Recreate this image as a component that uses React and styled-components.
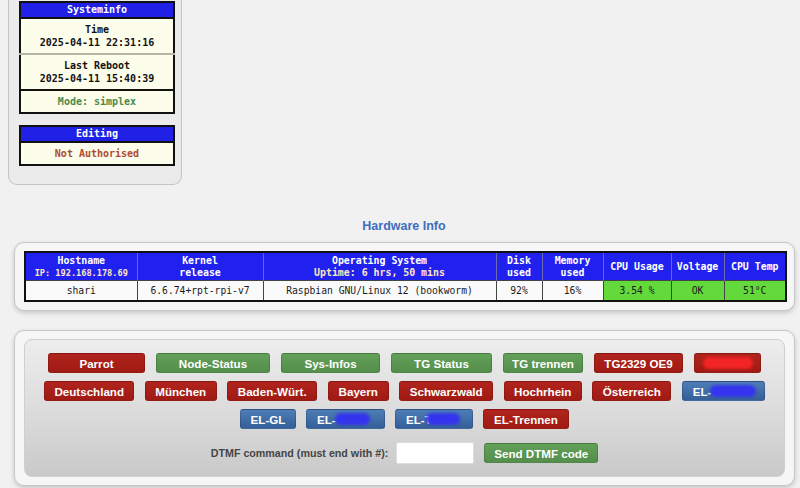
import styled, { createGlobalStyle } from 'styled-components';

const GlobalStyle = createGlobalStyle`
  html, body {
    margin: 0;
    padding: 0;
    background: #f1f1f1;
    overflow: hidden;
  }
  body {
    font-family: "Liberation Sans", Arial, sans-serif;
  }
`;

const Page = styled.div`
  width: 800px;
  height: 488px;
  overflow: hidden;
  display: flex;
  flex-direction: column;
`;

const SidePanel = styled.div`
  width: 174px;
  margin: -12px 0 0 8px;
  padding: 13px 8px 18px 10px;
  box-sizing: border-box;
  background: #ebebeb;
  border: 1px solid #c4c4c4;
  border-top: none;
  border-radius: 0 0 9px 9px;
  display: flex;
  flex-direction: column;
  gap: 11px;
`;

const InfoTable = styled.table`
  width: 156px;
  border-collapse: collapse;
  border: 2px solid #111;
  background: #fdfdeb;
  font-family: "DejaVu Sans Mono", monospace;
  font-size: 10px;
  font-weight: bold;
  text-align: center;
`;

const InfoHead = styled.th`
  background: #2020e6;
  color: #fff;
  height: 14px;
  padding: 0;
  line-height: 14px;
  font-size: 10px;
`;

const InfoCell = styled.td`
  padding: 4px 0;
  line-height: 13px;
  color: ${({ $color }) => $color || '#111'};
  border-top: 2px solid ${({ $line }) => $line || '#111'};
`;

const Heading = styled.h3`
  margin: 34px 0 9px;
  line-height: 14px;
  text-align: center;
  font-size: 12.5px;
  font-weight: bold;
  color: #3f6dbf;
  padding-left: 8px;
`;

const Frame = styled.div`
  width: 781px;
  box-sizing: border-box;
  margin: ${({ $mt }) => $mt || 0}px 0 0 14px;
  padding: 8px 9px;
  background: #f6f6f6;
  border: 1px solid #c6c6c6;
  border-radius: 10px;
  box-shadow: 0 2px 5px rgba(0, 0, 0, 0.18);
`;

const HwTable = styled.table`
  width: 761px;
  table-layout: fixed;
  border-collapse: collapse;
  border: 2px solid #111;
  font-family: "DejaVu Sans Mono", monospace;
  font-size: 9.7px;
  text-align: center;
`;

const HwHead = styled.th`
  background: #2121ef;
  color: #fff;
  font-weight: bold;
  padding: 1px 0;
  height: 25px;
  line-height: 12px;
  border-left: 1px solid #6a6ab0;
  font-size: 9.9px;
`;

const SubLine = styled.span`
  display: block;
  color: ${({ $tint }) => ($tint ? '#ffe6c0' : '#fff')};
  font-size: ${({ $small }) => ($small ? '8.6px' : '9.9px')};
`;

const HwCell = styled.td`
  background: ${({ $ok }) => ($ok ? '#63d93c' : '#fafafa')};
  color: #1a1a1a;
  height: 19px;
  padding: 0;
  border-left: 1px solid #444;
  border-top: 1px solid #444;
`;

const ControlBox = styled.div`
  background: linear-gradient(#ededed, #d9d9d9 60%, #c9c9c9);
  border: 1px solid #cfcfcf;
  border-radius: 8px;
  padding: 13px 0 12px;
  display: flex;
  flex-direction: column;
  align-items: center;
  gap: 8px;
`;

const Row = styled.div`
  display: flex;
  justify-content: center;
  align-items: center;
  gap: ${({ $gap }) => $gap || 10}px;
  margin-top: ${({ $mt }) => $mt || 0}px;
`;

const palette = {
  red: 'linear-gradient(#b0241d, #a01a14)',
  green: 'linear-gradient(#62a058, #558e4c)',
  blue: 'linear-gradient(#4e7db6, #345f98)',
};

const Btn = styled.button`
  position: relative;
  width: ${({ $w }) => $w}px;
  height: 20px;
  padding: 0;
  border: 1px solid rgba(0, 0, 0, 0.15);
  border-radius: 3px;
  background: ${({ $c }) => palette[$c]};
  color: #fff;
  font-family: "Liberation Sans", Arial, sans-serif;
  font-weight: bold;
  font-size: 11.6px;
  display: flex;
  align-items: center;
  justify-content: ${({ $left }) => ($left ? 'flex-start' : 'center')};
  padding-left: ${({ $left }) => ($left ? '10px' : '0')};
  overflow: hidden;
`;

const Smudge = styled.span`
  position: absolute;
  top: 3px;
  bottom: 3px;
  left: ${({ $l }) => $l}px;
  right: ${({ $r }) => $r}px;
  border-radius: 8px;
  background: ${({ $c }) => $c};
  filter: blur(1.5px);
`;

const Label = styled.span`
  font-size: 10.7px;
  font-weight: bold;
  color: #454545;
  margin-right: -2px;
`;

const Input = styled.input`
  width: 78px;
  height: 22px;
  box-sizing: border-box;
  border: 1px solid #ddd;
  border-radius: 2px;
  background: #fff;
`;

const columns = [112, 126, 233, 46, 61, 68, 53, 62];

const rowOne = [
  ['Parrot', 'red', 97],
  ['Node-Status', 'green', 114],
  ['Sys-Infos', 'green', 99],
  ['TG Status', 'green', 101],
  ['TG trennen', 'green', 80],
  ['TG2329 OE9', 'red', 89],
];

const rowTwo = [
  ['Deutschland', 90],
  ['München', 72],
  ['Baden-Würt.', 90],
  ['Bayern', 61],
  ['Schwarzwald', 94],
  ['Hochrhein', 78],
  ['Österreich', 79],
];

export default function App() {
  return (
    <Page>
      <GlobalStyle />
      <SidePanel>
        <InfoTable>
          <thead>
            <tr><InfoHead>Systeminfo</InfoHead></tr>
          </thead>
          <tbody>
            <tr><InfoCell $line="#111">Time<br />2025-04-11 22:31:16</InfoCell></tr>
            <tr><InfoCell $line="#b5b5a8">Last Reboot<br />2025-04-11 15:40:39</InfoCell></tr>
            <tr><InfoCell $color="#4b8a4b">Mode: simplex</InfoCell></tr>
          </tbody>
        </InfoTable>
        <InfoTable>
          <thead>
            <tr><InfoHead>Editing</InfoHead></tr>
          </thead>
          <tbody>
            <tr><InfoCell $color="#b04a30">Not Authorised</InfoCell></tr>
          </tbody>
        </InfoTable>
      </SidePanel>

      <Heading>Hardware Info</Heading>
      <Frame>
        <HwTable>
          <colgroup>
            {columns.map((w, i) => <col key={i} style={{ width: w }} />)}
          </colgroup>
          <thead>
            <tr>
              <HwHead>Hostname<SubLine $tint $small>IP: 192.168.178.69</SubLine></HwHead>
              <HwHead>Kernel<SubLine>release</SubLine></HwHead>
              <HwHead>Operating System<SubLine $tint>Uptime: 6 hrs, 50 mins</SubLine></HwHead>
              <HwHead>Disk<SubLine>used</SubLine></HwHead>
              <HwHead>Memory<SubLine>used</SubLine></HwHead>
              <HwHead>CPU Usage</HwHead>
              <HwHead>Voltage</HwHead>
              <HwHead>CPU Temp</HwHead>
            </tr>
          </thead>
          <tbody>
            <tr>
              <HwCell>shari</HwCell>
              <HwCell>6.6.74+rpt-rpi-v7</HwCell>
              <HwCell>Raspbian GNU/Linux 12 (bookworm)</HwCell>
              <HwCell>92%</HwCell>
              <HwCell>16%</HwCell>
              <HwCell $ok>3.54 %</HwCell>
              <HwCell $ok>OK</HwCell>
              <HwCell $ok>51°C</HwCell>
            </tr>
          </tbody>
        </HwTable>
      </Frame>

      <Frame $mt={19}>
        <ControlBox>
          <Row $gap={11}>
            {rowOne.map(([t, c, w]) => (
              <Btn key={t} $c={c} $w={w}>{t}</Btn>
            ))}
            <Btn $c="red" $w={67}><Smudge $c="#f22424" $l={8} $r={7} /></Btn>
          </Row>
          <Row $gap={10.5}>
            {rowTwo.map(([t, w]) => (
              <Btn key={t} $c="red" $w={w}>{t}</Btn>
            ))}
            <Btn $c="blue" $w={83} $left>EL-<Smudge $c="#3434ee" $l={27} $r={8} /></Btn>
          </Row>
          <Row $gap={10}>
            <Btn $c="blue" $w={56}>EL-GL</Btn>
            <Btn $c="blue" $w={79} $left>EL-<Smudge $c="#3434ee" $l={28} $r={14} /></Btn>
            <Btn $c="blue" $w={78} $left>EL-T<Smudge $c="#3434ee" $l={30} $r={12} /></Btn>
            <Btn $c="red" $w={86}>EL-Trennen</Btn>
          </Row>
          <Row $gap={10} $mt={5}>
            <Label>DTMF command (must end with #):</Label>
            <Input type="text" />
            <Btn $c="green" $w={114}>Send DTMF code</Btn>
          </Row>
        </ControlBox>
      </Frame>
    </Page>
  );
}
